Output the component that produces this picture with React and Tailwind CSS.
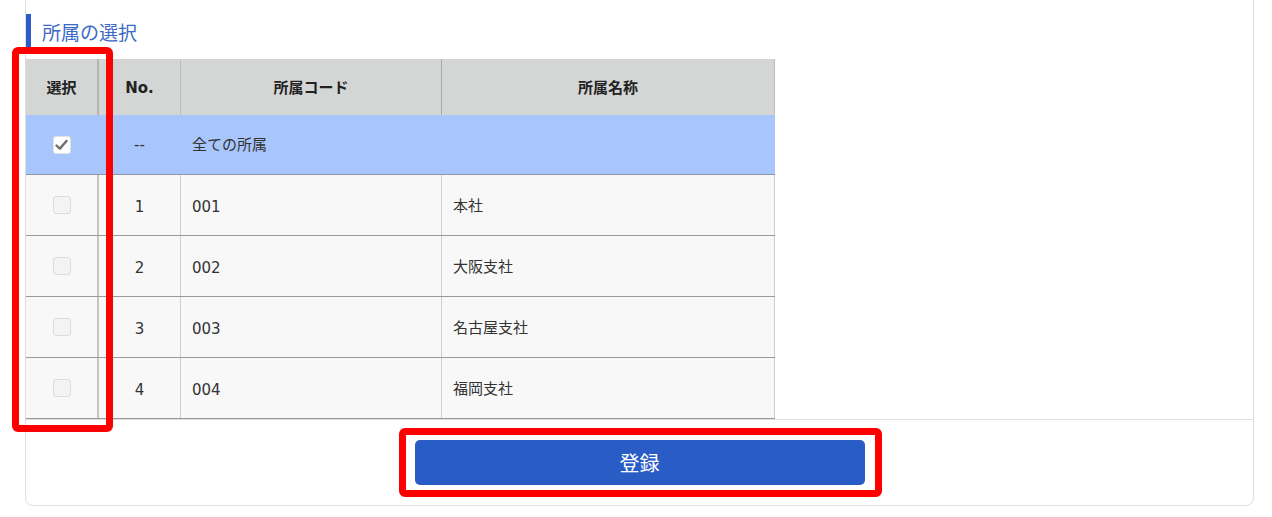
import React from "react";

const font = { fontFamily: '"DejaVu Sans", "Noto Sans CJK JP", sans-serif' };
const cjk = { fontFamily: '"Noto Sans CJK JP", "Noto Sans", sans-serif' };

function Check({ checked }) {
  if (checked) {
    return (
      <div className="w-[18px] h-[18px] rounded-[3px] bg-white border border-[#e2e2e2] flex items-center justify-center">
        <svg width="13" height="12" viewBox="0 0 13 12">
          <path d="M1.5 6.5 L4.8 9.6 L11.5 2" fill="none" stroke="#6e6e6e" strokeWidth="2.4" strokeLinecap="round" strokeLinejoin="round" />
        </svg>
      </div>
    );
  }
  return <div className="w-[18px] h-[18px] rounded-[3px] bg-[#f3f3f3] border border-[#dcdcdc]" />;
}

const rows = [
  { no: "1", code: "001", name: "本社" },
  { no: "2", code: "002", name: "大阪支社" },
  { no: "3", code: "003", name: "名古屋支社" },
  { no: "4", code: "004", name: "福岡支社" },
];

export default function App() {
  return (
    <div className="relative w-[1272px] h-[517px] bg-white overflow-hidden text-[#333]" style={font}>
      <div className="ml-[25px] w-[1229px] -mt-[10px] border border-[#dedede] rounded-[8px] bg-white pt-[23px]">
        <div className="h-[34px] border-l-[5px] border-[#2b5cc6] pl-[11px] flex items-center text-[19px] text-[#3b69c6] leading-none" style={cjk}>
          所属の選択
        </div>
        <div className="mt-[11px] w-[749px] text-[15px]">
          <div className="flex h-[56px] bg-[#d4d5d5] font-bold text-[#222]">
            <div className="w-[73px] border-r-[2px] border-[#b4b4b4] flex items-center justify-center" style={cjk}>選択</div>
            <div className="w-[82px] border-r border-[#bdbdbd] flex items-center justify-center pt-[2px]">No.</div>
            <div className="w-[261px] border-r border-[#a8a8a8] flex items-center justify-center" style={cjk}>所属コード</div>
            <div className="w-[333px] border-r border-[#bdbdbd] flex items-center justify-center" style={cjk}>所属名称</div>
          </div>
          <div className="flex h-[60px] bg-[#a8c6fb] border-b border-[#8e98a8]">
            <div className="w-[73px] border-r-[2px] border-[#a8c6fb] flex items-center justify-center">
              <Check checked />
            </div>
            <div className="w-[82px] border-r border-[#a8c6fb] flex items-center justify-center pt-[2px]">--</div>
            <div className="w-[594px] pl-[11px] flex items-center" style={cjk}>全ての所属</div>
          </div>
          {rows.map((r) => (
            <div key={r.no} className="flex h-[61px] bg-[#f8f8f8] border-b border-[#9a9a9a]">
              <div className="w-[73px] border-r-[2px] border-[#c4c4c4] flex items-center justify-center">
                <Check />
              </div>
              <div className="w-[82px] border-r border-[#cfcfcf] flex items-center justify-center pt-[4px]">{r.no}</div>
              <div className="w-[261px] border-r border-[#cfcfcf] pl-[11px] flex items-center pt-[4px]">{r.code}</div>
              <div className="w-[333px] border-r border-[#cfcfcf] pl-[11px] flex items-center" style={cjk}>{r.name}</div>
            </div>
          ))}
        </div>
        <div className="border-t border-[#dedede] h-[86px] flex justify-center pt-[20px]">
          <button className="w-[450px] h-[45px] rounded-[5px] bg-[#2a5cc6] text-white text-[20px]" style={cjk}>
            登録
          </button>
        </div>
      </div>
      <div className="absolute left-[12px] top-[47px] w-[101px] h-[385px] border-[7px] border-[#ff0000] rounded-[6px]" />
      <div className="absolute left-[399px] top-[428px] w-[483px] h-[69px] border-[7px] border-[#ff0000] rounded-[6px]" />
    </div>
  );
}
